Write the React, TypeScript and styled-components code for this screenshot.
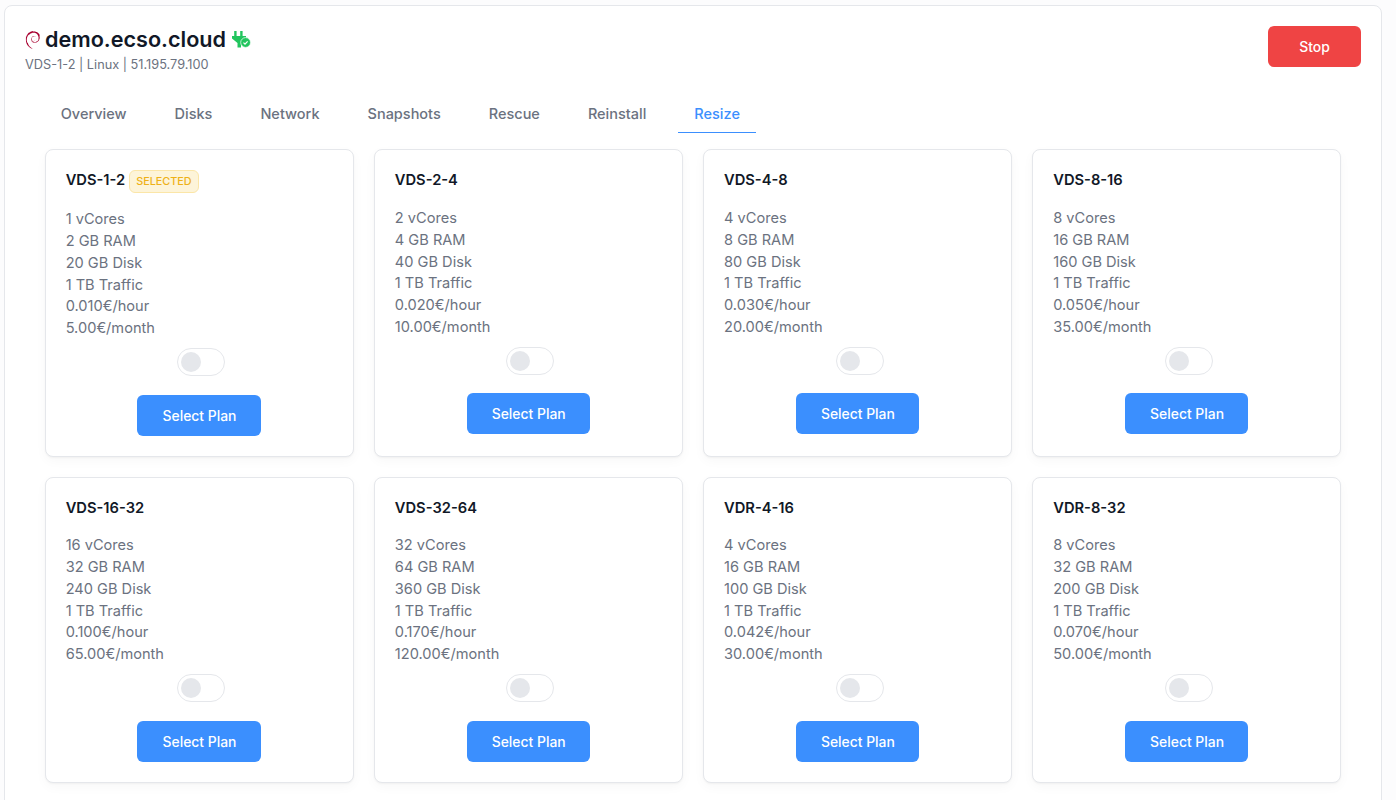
import React from "react";
import styled, { createGlobalStyle } from "styled-components";
import { SiDebian } from "react-icons/si";

const GlobalStyle = createGlobalStyle`
  html, body {
    margin: 0;
    height: 800px;
    overflow: hidden;
    background: #fcfcfd;
    font-family: Inter, "Noto Sans", sans-serif;
  }
  * { box-sizing: border-box; }
`;

const Page = styled.div`
  padding: 5px 14px 0 4px;
`;

const Panel = styled.main`
  background: #fff;
  border: 1px solid #e5e7eb;
  border-radius: 8px;
  padding: 20px 40px 40px 20px;
`;

const Header = styled.header`
  display: flex;
  justify-content: space-between;
  align-items: flex-start;
  margin-right: -20px;
`;

const TitleRow = styled.div`
  display: flex;
  align-items: center;
  height: 27px;
`;

const Logo = styled(SiDebian)`
  margin-left: -1px;
`;

const ServerName = styled.h1`
  margin: 0 6px 0 3px;
  font-size: 21.6px;
  line-height: 27px;
  font-weight: 600;
  color: #111827;
`;

const Meta = styled.div`
  margin-top: 4px;
  font-size: 12.75px;
  line-height: 16px;
  color: #6b7280;
`;

const DangerButton = styled.button`
  width: 93px;
  height: 41px;
  border: 0;
  border-radius: 6px;
  background: #ef4444;
  color: #fff;
  font: 500 13.9px Inter, sans-serif;
`;

const Tabs = styled.nav`
  display: flex;
  gap: 16px;
  margin: 24px 0 16.3px 19.75px;
`;

const Tab = styled.a<{ $active?: boolean }>`
  padding: 0 16px;
  height: 36px;
  line-height: 34px;
  font-size: 14.5px;
  font-weight: 500;
  color: ${(p) => (p.$active ? "#3b8ffe" : "#6b7280")};
  border-bottom: 1px solid ${(p) => (p.$active ? "#3b8ffe" : "transparent")};
`;

const PlanGrid = styled.section`
  display: grid;
  grid-template-columns: repeat(4, 309.2px);
  gap: 20px;
  margin-left: 19.65px;
`;

const PlanCard = styled.article`
  display: flex;
  flex-direction: column;
  align-items: flex-start;
  padding: 20px;
  background: #fff;
  border: 1px solid #e5e7eb;
  border-radius: 8px;
  box-shadow: 0 4px 12px rgba(0, 0, 0, 0.03), 0 1px 2px rgba(0, 0, 0, 0.04);
`;

const PlanHead = styled.div<{ $selected?: boolean }>`
  display: flex;
  align-items: flex-start;
  min-height: ${(p) => (p.$selected ? "23px" : "20px")};
  margin-bottom: ${(p) => (p.$selected ? "16px" : "17.8px")};
`;

const PlanName = styled.h3`
  margin: 0;
  font-size: 14.7px;
  line-height: 20px;
  font-weight: 600;
  color: #111827;
`;

const Badge = styled.span`
  margin-left: 4px;
  height: 23px;
  padding: 0 6px;
  line-height: 21px;
  font-size: 10.8px;
  font-weight: 500;
  color: #eeb117;
  background: #fdf4d9;
  border: 1px solid #fbe6a8;
  border-radius: 6px;
`;

const Spec = styled.div`
  font-size: 14.6px;
  line-height: 21.75px;
  color: #6b7280;
`;

const Toggle = styled.span<{ $selected?: boolean }>`
  display: flex;
  align-items: center;
  align-self: center;
  width: 48px;
  height: 28px;
  margin: ${(p) => (p.$selected ? "8px 0 18.9px 3.8px" : "8.2px 0 18.5px 3.8px")};
  padding-left: 3px;
  background: #fff;
  border: 1px solid #e5e7eb;
  border-radius: 14px;
`;

const Knob = styled.span`
  width: 20px;
  height: 20px;
  border-radius: 50%;
  background: #e5e7eb;
`;

const SelectButton = styled.button`
  align-self: center;
  width: 123.4px;
  height: 41px;
  margin-right: 0.45px;
  padding: 0.8px 0 0 1px;
  border: 0;
  border-radius: 6px;
  background: #3b8ffe;
  color: #fff;
  font: 500 13.9px Inter, sans-serif;
`;

const PlugIcon = () => (
  <svg width="19" height="18" viewBox="0 0 19 18">
    <path d="M3.4 0v5M9.4 0v5" stroke="#22c55e" strokeWidth="2.4" fill="none" />
    <path d="M0 5h14v2.5L9 12v4.5H5.5V12L0 7.5z" fill="#22c55e" />
    <circle cx="13.6" cy="11.5" r="4.9" fill="#22c55e" stroke="#fff" strokeWidth="0.7" />
    <path d="M11.5 11.6l1.5 1.5 2.6-2.8" stroke="#fff" strokeWidth="1.2" fill="none" />
  </svg>
);

type Plan = {
  name: string;
  cores: number;
  ram: number;
  disk: number;
  hourly: string;
  monthly: string;
  selected?: boolean;
};

const plans: Plan[] = [
  { name: "VDS-1-2", cores: 1, ram: 2, disk: 20, hourly: "0.010", monthly: "5.00", selected: true },
  { name: "VDS-2-4", cores: 2, ram: 4, disk: 40, hourly: "0.020", monthly: "10.00" },
  { name: "VDS-4-8", cores: 4, ram: 8, disk: 80, hourly: "0.030", monthly: "20.00" },
  { name: "VDS-8-16", cores: 8, ram: 16, disk: 160, hourly: "0.050", monthly: "35.00" },
  { name: "VDS-16-32", cores: 16, ram: 32, disk: 240, hourly: "0.100", monthly: "65.00" },
  { name: "VDS-32-64", cores: 32, ram: 64, disk: 360, hourly: "0.170", monthly: "120.00" },
  { name: "VDR-4-16", cores: 4, ram: 16, disk: 100, hourly: "0.042", monthly: "30.00" },
  { name: "VDR-8-32", cores: 8, ram: 32, disk: 200, hourly: "0.070", monthly: "50.00" },
];

const tabs = ["Overview", "Disks", "Network", "Snapshots", "Rescue", "Reinstall", "Resize"];

const App = () => (
  <Page>
    <GlobalStyle />
    <Panel>
      <Header>
        <div>
          <TitleRow>
            <Logo size={18} color="#a80030" />
            <ServerName>demo.ecso.cloud</ServerName>
            <PlugIcon />
          </TitleRow>
          <Meta>VDS-1-2 | Linux | 51.195.79.100</Meta>
        </div>
        <DangerButton>Stop</DangerButton>
      </Header>
      <Tabs>
        {tabs.map((tab) => (
          <Tab key={tab} $active={tab === "Resize"}>
            {tab}
          </Tab>
        ))}
      </Tabs>
      <PlanGrid>
        {plans.map((plan) => (
          <PlanCard key={plan.name}>
            <PlanHead $selected={plan.selected}>
              <PlanName>{plan.name}</PlanName>
              {plan.selected && <Badge>SELECTED</Badge>}
            </PlanHead>
            <Spec>{plan.cores} vCores</Spec>
            <Spec>{plan.ram} GB RAM</Spec>
            <Spec>{plan.disk} GB Disk</Spec>
            <Spec>1 TB Traffic</Spec>
            <Spec>{plan.hourly}€/hour</Spec>
            <Spec>{plan.monthly}€/month</Spec>
            <Toggle $selected={plan.selected}>
              <Knob />
            </Toggle>
            <SelectButton>Select Plan</SelectButton>
          </PlanCard>
        ))}
      </PlanGrid>
    </Panel>
  </Page>
);

export default App;
